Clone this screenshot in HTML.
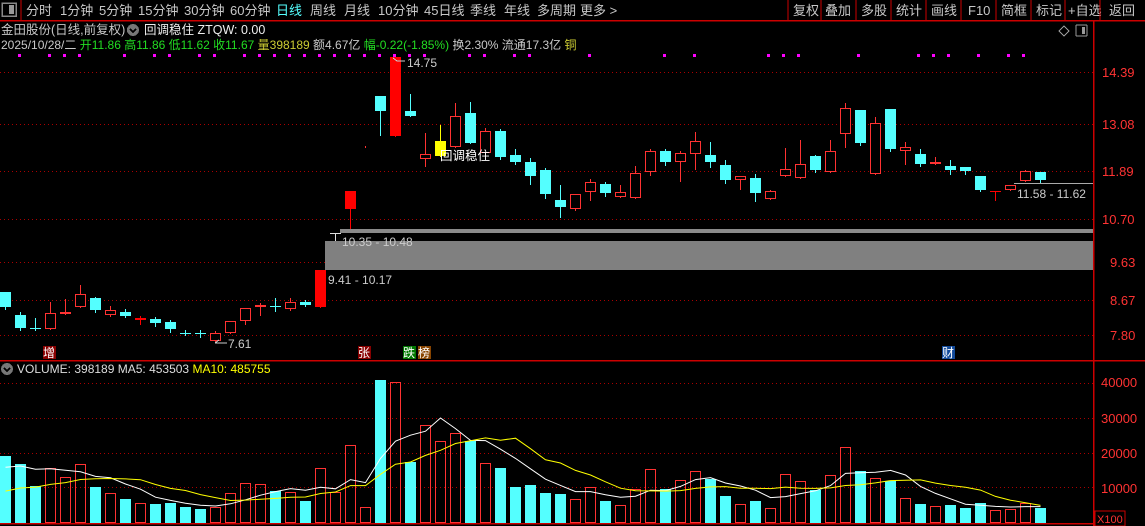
<!DOCTYPE html>
<html><head><meta charset="utf-8"><style>
body{margin:0;background:#000;width:1145px;height:526px;overflow:hidden;font-family:"Liberation Sans","Noto Sans CJK SC",sans-serif;}
svg{position:absolute;left:0;top:0}
text{font-family:"Liberation Sans","Noto Sans CJK SC",sans-serif}
</style></head><body>
<svg id="s" width="1145" height="526" xmlns="http://www.w3.org/2000/svg" shape-rendering="crispEdges">
<rect width="1145" height="526" fill="#000"/>
<!-- toolbar -->
<rect x="2" y="3" width="14" height="13" fill="none" stroke="#888" stroke-width="1.5"/><rect x="9" y="5" width="5" height="9" fill="#999"/>
<line x1="21" y1="0" x2="21" y2="20" stroke="#c00"/>
<g font-size="13" fill="#c8c8c8">
<text x="26" y="15">分时</text><text x="60" y="15">1分钟</text><text x="99" y="15">5分钟</text><text x="138" y="15">15分钟</text><text x="184" y="15">30分钟</text><text x="230" y="15">60分钟</text>
<text x="276" y="15" fill="#5ff">日线</text><text x="310" y="15">周线</text><text x="344" y="15">月线</text><text x="378" y="15">10分钟</text><text x="424" y="15">45日线</text><text x="470" y="15">季线</text><text x="504" y="15">年线</text><text x="537" y="15">多周期</text><text x="580" y="15">更多 &gt;</text>
<text x="793" y="15">复权</text><text x="825" y="15">叠加</text><text x="861" y="15">多股</text><text x="896" y="15">统计</text><text x="931" y="15">画线</text><text x="968" y="15">F10</text><text x="1001" y="15">简框</text><text x="1036" y="15">标记</text><text x="1068" y="15">+自选</text><text x="1109" y="15">返回</text>
</g>
<g stroke="#c00"><line x1="788" y1="0" x2="788" y2="20"/><line x1="821" y1="0" x2="821" y2="20"/><line x1="856" y1="0" x2="856" y2="20"/><line x1="891" y1="0" x2="891" y2="20"/><line x1="926" y1="0" x2="926" y2="20"/><line x1="961" y1="0" x2="961" y2="20"/><line x1="996" y1="0" x2="996" y2="20"/><line x1="1031" y1="0" x2="1031" y2="20"/><line x1="1065" y1="0" x2="1065" y2="20"/><line x1="1100" y1="0" x2="1100" y2="20"/></g>
<line x1="0" y1="20.5" x2="1145" y2="20.5" stroke="#c00" stroke-width="1.5"/>
<!-- header -->
<text x="1" y="34" font-size="12.5" fill="#c8c8c8">金田股份(日线,前复权)</text>
<circle cx="133" cy="30" r="6" fill="#777"/><path d="M130 29l3 3 3-3" stroke="#000" fill="none" stroke-width="1.5"/>
<text x="144" y="34" font-size="12.5" fill="#eee">回调稳住  ZTQW: 0.00</text>
<text y="49" font-size="12" fill="#c8c8c8"><tspan x="1">2025/10/28/二 </tspan><tspan fill="#2d2">开11.86 高11.86 低11.62 收11.67 </tspan><tspan fill="#cc3">量398189 </tspan><tspan fill="#c8c8c8">额4.67亿 </tspan><tspan fill="#2d2">幅-0.22(-1.85%) </tspan><tspan fill="#c8c8c8">换2.30% 流通17.3亿 </tspan><tspan fill="#cc3">铜</tspan></text>
<path d="M1064 26l5 5-5 5-5-5z" fill="none" stroke="#999"/>
<rect x="1076" y="25" width="11" height="11" fill="none" stroke="#999" rx="1"/><rect x="1082" y="27" width="3" height="7" fill="#999"/>
<!-- axes -->
<line x1="1093.5" y1="21" x2="1093.5" y2="526" stroke="#c00" stroke-width="1.5"/>
<line x1="0" y1="360.5" x2="1145" y2="360.5" stroke="#c00" stroke-width="1.5"/>
<g id="grid" stroke="#a00" stroke-dasharray="1 3"></g>
<g font-size="13" fill="#f33">
<text x="1102" y="77">14.39</text><text x="1102" y="129">13.08</text><text x="1102" y="176">11.89</text><text x="1102" y="224">10.70</text><text x="1110" y="267">9.63</text><text x="1110" y="305">8.67</text><text x="1110" y="340">7.80</text>
<text x="1101" y="387">40000</text><text x="1101" y="423">30000</text><text x="1101" y="458">20000</text><text x="1101" y="493">10000</text>
</g>
<rect x="1095" y="511" width="30" height="15" fill="none" stroke="#c00"/>
<text x="1097" y="523" font-size="11" fill="#f33">X100</text>
<!-- bands -->
<rect x="340" y="229" width="753" height="4" fill="#8a8a8a"/>
<rect x="325" y="241" width="768" height="29" fill="#808080"/>
<g id="c"></g>
<g font-size="12" fill="#ccc">
<text x="342" y="246">10.35 - 10.48</text><text x="328" y="284">9.41 - 10.17</text><text x="1017" y="198">11.58 - 11.62</text><text x="228" y="348">7.61</text><text x="407" y="67">14.75</text>
</g>
<line x1="1014" y1="183.5" x2="1093" y2="183.5" stroke="#aaa"/>
<path d="M215 343h12M215 343l4-3M393 58l4 3h8" stroke="#ccc" fill="none"/>
<text x="440" y="160" font-size="12.5" fill="#fff">回调稳住</text>
<!-- markers -->
<rect x="43" y="346" width="13" height="13" fill="#800"/><text x="43" y="357" font-size="12" fill="#fff">增</text>
<rect x="358" y="346" width="13" height="13" fill="#800"/><text x="358" y="357" font-size="12" fill="#fff">张</text>
<rect x="403" y="346" width="13" height="13" fill="#070"/><text x="403" y="357" font-size="12" fill="#fff">跌</text>
<rect x="418" y="346" width="13" height="13" fill="#840"/><text x="418" y="357" font-size="12" fill="#fff">榜</text>
<rect x="942" y="346" width="13" height="13" fill="#124a9a"/><text x="942" y="357" font-size="12" fill="#fff">财</text>
<!-- volume header -->
<circle cx="7" cy="369" r="6" fill="#777"/><path d="M4 368l3 3 3-3" stroke="#000" fill="none" stroke-width="1.5"/>
<text x="17" y="373" font-size="12" fill="#ddd">VOLUME: 398189  MA5: 453503  <tspan fill="#ff0">MA10: 485755</tspan></text>
<g id="v"></g>
<line x1="0" y1="523.5" x2="1093" y2="523.5" stroke="#c00" stroke-width="1.5"/>
</svg>
<script>
var NS="http://www.w3.org/2000/svg";
function el(p,t,a){var e=document.createElementNS(NS,t);for(var k in a)e.setAttribute(k,a[k]);document.getElementById(p).appendChild(e);return e;}
[72,124,171,219,262,300,335].forEach(function(y){el("grid","line",{x1:0,x2:1093,y1:y+.5,y2:y+.5});});
[383,418,453,487].forEach(function(y){el("grid","line",{x1:0,x2:1093,y1:y+.5,y2:y+.5});});
// magenta dots
[19,49,64,79,124,154,169,199,214,244,259,274,289,304,319,334,349,364,379,394,409,424,469,484,514,529,589,664,694,768,783,798,858,918,933,948,978,1008,1023].forEach(function(x){el("c","rect",{x:x-1,y:54,width:3,height:3,fill:"#f0f"});});
// candles: type, bodyTop, bodyBot, wickTop, wickBot
var C=[["c",292,307,292,309],["c",315,328,312,330],["c",328,329,318,330],["r",313,329,302,329],["r",312,314,299,314],["r",294,307,285,307],["c",298,310,297,312],["r",310,315,306,316],["c",312,316,309,317],["R",318,320,316,324],["c",319,323,317,326],["c",322,329,320,332],["c",333,334,330,335],["c",333,334,330,337],["r",333,341,331,341],["r",321,333,321,333],["r",308,321,308,324],["r",305,307,303,315],["c",306,307,298,311],["r",302,309,298,310],["c",302,305,300,306],["R",270,307,270,307],["w",233,234,233,240],["R",191,209,191,228],["r",146,147,146,147],["c",96,111,96,135],["R",57,136,57,136],["c",111,116,94,116],["r",154,159,133,166],["Y",141,156,125,156],["r",116,147,103,147],["c",113,143,102,143],["r",131,153,128,153],["c",131,157,129,159],["c",155,162,149,164],["c",162,176,158,184],["c",170,194,168,198],["c",200,207,185,217],["r",194,209,194,210],["r",182,192,179,200],["c",184,193,182,196],["r",192,197,185,197],["r",173,198,166,198],["r",151,172,149,175],["c",151,162,149,165],["r",153,162,151,181],["r",141,154,132,169],["c",155,162,142,167],["c",165,180,160,183],["r",176,180,176,189],["c",178,193,174,201],["r",191,199,190,199],["r",169,176,148,176],["r",164,178,140,178],["c",156,170,155,172],["r",151,172,140,172],["r",108,134,103,147],["c",110,143,110,145],["r",123,174,117,174],["c",109,149,109,151],["r",147,151,142,164],["c",154,164,149,166],["r",162,164,157,164],["c",166,170,160,174],["c",167,171,167,174],["c",176,190,176,191],["R",191,192,191,200],["r",185,190,185,190],["r",171,181,170,181],["c",172,180,172,182]];
var col={c:"#54ffff",r:"#ff3232",R:"#ff0000",Y:"#ffff00",w:"#ddd"};
C.forEach(function(d,i){var x=15*i,cx=x+5.5,c=col[d[0]];
 el("c","line",{x1:cx,x2:cx,y1:d[3],y2:d[4]+1,stroke:c});
 var h=Math.max(d[2]-d[1],1);
 if(d[0]=="r"){el("c","rect",{x:x+.5,y:d[1]+.5,width:10,height:Math.max(h-1,0),fill:"#000",stroke:c});}
 else el("c","rect",{x:x,y:d[1],width:11,height:h,fill:c});
});
// volume
var V=[456,464,486,468,477,464,487,493,499,503,504,503,507,509,507,493,483,484,491,492,501,468,492,445,507,380,382,462,425,441,433,441,463,468,487,485,493,494,499,487,501,505,489,469,489,480,471,479,496,504,501,508,474,481,490,475,447,471,478,481,498,504,506,505,508,503,510,509,503,508];
var B=523;
V.forEach(function(t,i){var x=15*i,d=C[i][0];var c=(d=="c")?"#54ffff":"#ff3232";
 if(d=="c")el("v","rect",{x:x,y:t,width:11,height:B-t,fill:c});
 else el("v","rect",{x:x+.5,y:t+.5,width:10,height:B-t-1,fill:"none",stroke:c});
});
function ma(n,pre){var p=[];for(var i=0;i<V.length;i++){var s=0,k=0;for(var j=i-n+1;j<=i;j++){s+=B-(j>=0?V[j]:pre);k++;}p.push((15*i+5.5)+","+(B-s/k).toFixed(1));}return p.join(" ");}
var l1=el("v","polyline",{points:ma(5,470),fill:"none",stroke:"#fff","shape-rendering":"auto"});
var l2=el("v","polyline",{points:ma(10,495),fill:"none",stroke:"#ff0","shape-rendering":"auto"});
</script>
</body></html>
